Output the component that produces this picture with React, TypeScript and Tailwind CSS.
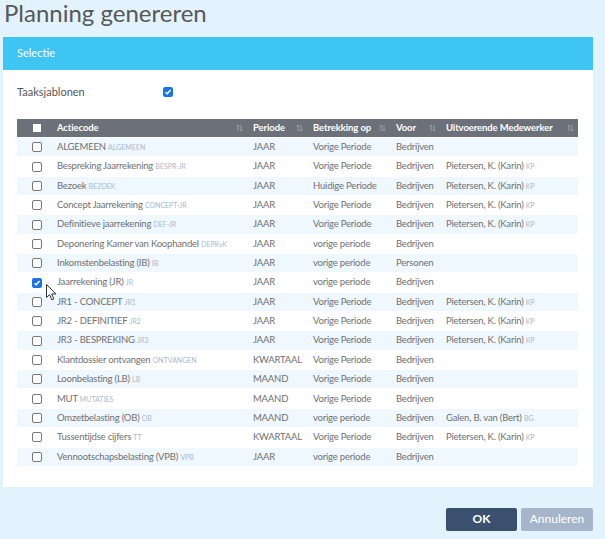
import React from 'react';

type Row = {
  name: string;
  code: string;
  periode: string;
  betrekking: string;
  voor: string;
  medewerker?: string;
  initials?: string;
  checked?: boolean;
};

const KP = { medewerker: 'Pietersen, K. (Karin)', initials: 'KP' };

const rows: Row[] = [
  { name: 'ALGEMEEN', code: 'ALGEMEEN', periode: 'JAAR', betrekking: 'Vorige Periode', voor: 'Bedrijven' },
  { name: 'Bespreking Jaarrekening', code: 'BESPR-JR', periode: 'JAAR', betrekking: 'Vorige Periode', voor: 'Bedrijven', ...KP },
  { name: 'Bezoek', code: 'BEZOEK', periode: 'JAAR', betrekking: 'Huidige Periode', voor: 'Bedrijven', ...KP },
  { name: 'Concept Jaarrekening', code: 'CONCEPT-JR', periode: 'JAAR', betrekking: 'Vorige Periode', voor: 'Bedrijven', ...KP },
  { name: 'Definitieve jaarrekening', code: 'DEF-JR', periode: 'JAAR', betrekking: 'Vorige Periode', voor: 'Bedrijven', ...KP },
  { name: 'Deponering Kamer van Koophandel', code: 'DEPKvK', periode: 'JAAR', betrekking: 'vorige periode', voor: 'Bedrijven' },
  { name: 'Inkomstenbelasting (IB)', code: 'IB', periode: 'JAAR', betrekking: 'vorige periode', voor: 'Personen' },
  { name: 'Jaarrekening (JR)', code: 'JR', periode: 'JAAR', betrekking: 'vorige periode', voor: 'Bedrijven', checked: true },
  { name: 'JR1 - CONCEPT', code: 'JR1', periode: 'JAAR', betrekking: 'Vorige Periode', voor: 'Bedrijven', ...KP },
  { name: 'JR2 - DEFINITIEF', code: 'JR2', periode: 'JAAR', betrekking: 'Vorige Periode', voor: 'Bedrijven', ...KP },
  { name: 'JR3 - BESPREKING', code: 'JR3', periode: 'JAAR', betrekking: 'Vorige Periode', voor: 'Bedrijven', ...KP },
  { name: 'Klantdossier ontvangen', code: 'ONTVANGEN', periode: 'KWARTAAL', betrekking: 'Vorige Periode', voor: 'Bedrijven' },
  { name: 'Loonbelasting (LB)', code: 'LB', periode: 'MAAND', betrekking: 'Vorige Periode', voor: 'Bedrijven' },
  { name: 'MUT', code: 'MUTATIES', periode: 'MAAND', betrekking: 'Vorige Periode', voor: 'Bedrijven' },
  { name: 'Omzetbelasting (OB)', code: 'OB', periode: 'MAAND', betrekking: 'vorige periode', voor: 'Bedrijven', medewerker: 'Galen, B. van (Bert)', initials: 'BG' },
  { name: 'Tussentijdse cijfers', code: 'TT', periode: 'KWARTAAL', betrekking: 'Vorige Periode', voor: 'Bedrijven', ...KP },
  { name: 'Vennootschapsbelasting (VPB)', code: 'VPB', periode: 'JAAR', betrekking: 'vorige periode', voor: 'Bedrijven' },
];

const cols = 'grid grid-cols-[34px_196px_60px_83px_50px_138px]';

const Check: React.FC<{ checked?: boolean }> = ({ checked }) =>
  checked ? (
    <span className="flex h-[10px] w-[10px] items-center justify-center rounded-[2px] bg-[#1a73e8]">
      <svg width="8" height="8" viewBox="0 0 8 8">
        <path d="M1.5 4.2 L3.2 5.8 L6.6 2" fill="none" stroke="#fff" strokeWidth="1.5" />
      </svg>
    </span>
  ) : (
    <span className="block h-[10px] w-[10px] rounded-[2px] border border-[#777] bg-white" />
  );

const SortIcon = () => (
  <svg width="7" height="8" viewBox="0 0 7 8" className="shrink-0">
    <path d="M2 1 L2 7 M0.6 2.4 L2 1 L3.4 2.4" fill="none" stroke="#9ba1a9" strokeWidth="1" />
    <path d="M5 1 L5 7 M3.6 5.6 L5 7 L6.4 5.6" fill="none" stroke="#9ba1a9" strokeWidth="1" />
  </svg>
);

const HeadCell: React.FC<{ label: string }> = ({ label }) => (
  <div className="flex items-center justify-between pl-[6px] pr-[4px]">
    <span>{label}</span>
    <SortIcon />
  </div>
);

export default function App() {
  return (
    <div className="relative min-h-[539px] w-[605px] bg-[#e2f3fd] pl-[3px] font-['Lato',sans-serif]">
      <h1 className="ml-[1px] text-[24px] leading-[26px] text-[#585858]">Planning genereren</h1>

      <div className="mt-[11px] w-[590px] bg-white">
        <div className="flex h-[33px] items-center bg-[#3ec5f1] px-[14px] text-[11px] text-white">Selectie</div>
        <div className="px-[14px] pb-[21px] pt-[12px]">
          <div className="flex h-[20px] items-center text-[11px] text-[#555]">
            <span className="w-[146px]">Taaksjablonen</span>
            <Check checked />
          </div>

          <div className="mt-[17px] w-[561px]">
            <div className={`${cols} h-[18px] bg-[#6b7079] text-[9.5px] font-bold tracking-[-0.1px] text-white`}>
              <div className="flex items-center pl-[16px]">
                <span className="block h-[8px] w-[8px] bg-white" />
              </div>
              <HeadCell label="Actiecode" />
              <HeadCell label="Periode" />
              <HeadCell label="Betrekking op" />
              <HeadCell label="Voor" />
              <HeadCell label="Uitvoerende Medewerker" />
            </div>
            {rows.map((r, i) => (
              <div
                key={r.code}
                className={`${cols} h-[19.35px] items-center border-t border-white text-[9.5px] tracking-[-0.2px] text-[#707070] ${
                  i % 2 === 0 ? 'bg-[#eef8fe]' : 'bg-white'
                }`}
              >
                <div className="pl-[15px]">
                  <Check checked={r.checked} />
                </div>
                <div className="truncate pl-[6px]">
                  {r.name} <span className="text-[7px] tracking-normal text-[#aab9cc]">{r.code}</span>
                </div>
                <div className="pl-[6px]">{r.periode}</div>
                <div className="pl-[6px]">{r.betrekking}</div>
                <div className="pl-[6px]">{r.voor}</div>
                <div className="truncate pl-[6px]">
                  {r.medewerker && (
                    <>
                      {r.medewerker} <span className="text-[7px] tracking-normal text-[#aab9cc]">{r.initials}</span>
                    </>
                  )}
                </div>
              </div>
            ))}
          </div>
        </div>
      </div>

      <div className="mt-[21px] flex w-[590px] justify-end gap-[4px]">
        <button className="h-[23px] w-[71px] rounded-[2px] bg-[#3b4f6f] text-[12px] font-bold text-white">OK</button>
        <button className="h-[23px] w-[72px] rounded-[2px] bg-[#a7b5ca] text-[12px] text-white">Annuleren</button>
      </div>

      {/* mouse cursor */}
      <svg className="absolute left-[46px] top-[284px]" width="11" height="17" viewBox="0 0 11 17">
        <path d="M0.5 0.5 L0.5 13.5 L3.6 10.6 L5.8 15.8 L7.8 15 L5.7 9.9 L10 9.9 Z" fill="#fff" stroke="#333" strokeWidth="1" />
      </svg>
    </div>
  );
}
